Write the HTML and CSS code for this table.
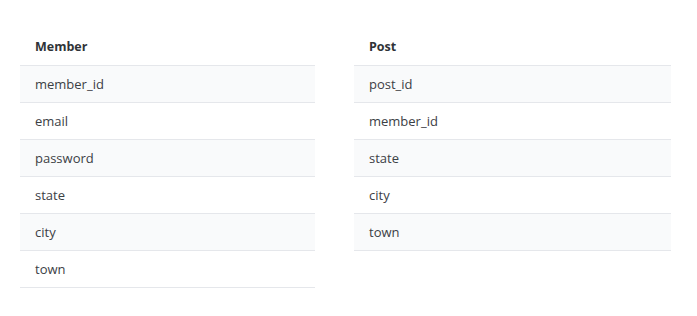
FILE: index.html
```html
<!DOCTYPE html>
<html>
<head>
<meta charset="utf-8">
<link rel="stylesheet" href="styles.css">
</head>
<body>
<div class="wrap">
  <table class="tbl tbl-member">
    <thead><tr><th>Member</th></tr></thead>
    <tbody>
      <tr><td>member_id</td></tr>
      <tr><td>email</td></tr>
      <tr><td>password</td></tr>
      <tr><td>state</td></tr>
      <tr><td>city</td></tr>
      <tr><td>town</td></tr>
    </tbody>
  </table>
  <table class="tbl tbl-post">
    <thead><tr><th>Post</th></tr></thead>
    <tbody>
      <tr><td>post_id</td></tr>
      <tr><td>member_id</td></tr>
      <tr><td>state</td></tr>
      <tr><td>city</td></tr>
      <tr><td>town</td></tr>
    </tbody>
  </table>
</div>
</body>
</html>
```
FILE: styles.css
```css
html, body {
  margin: 0;
  padding: 0;
  background: #ffffff;
}
body {
  font-family: "Open Sans", "Noto Sans", sans-serif;
  font-size: 13px;
  color: #3c4045;
}
.wrap {
  display: grid;
  grid-template-columns: 295px 317px;
  column-gap: 39px;
  align-items: start;
  padding: 29px 0 0 20px;
}
.tbl {
  border-collapse: collapse;
  width: 100%;
}
.tbl th, .tbl td {
  height: 36px;
  padding: 0 15px;
  text-align: left;
  border-bottom: 1px solid #e5e7eb;
  line-height: 16px;
}
.tbl th {
  font-weight: 700;
  font-size: 12.5px;
  color: #2f3337;
}
.tbl tbody tr:nth-child(odd) td {
  background: #f9fafb;
}
```
